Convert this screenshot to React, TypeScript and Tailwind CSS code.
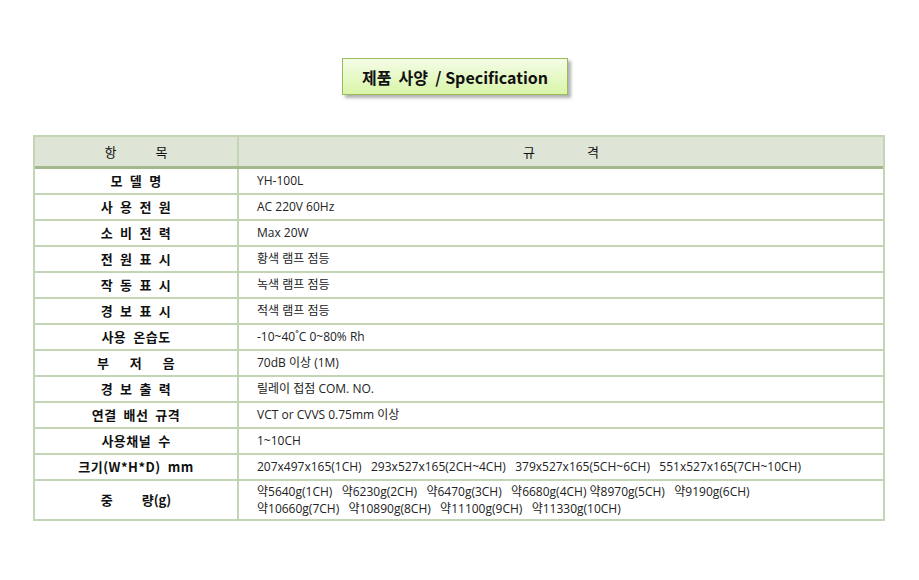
export default function App() {
  const rows: [string, React.ReactNode][] = [
    ["모 델 명", "YH-100L"],
    ["사 용 전 원", "AC 220V 60Hz"],
    ["소 비 전 력", "Max 20W"],
    ["전 원 표 시", "황색 램프 점등"],
    ["작 동 표 시", "녹색 램프 점등"],
    ["경 보 표 시", "적색 램프 점등"],
    ["사용 온습도", "-10~40˚C 0~80% Rh"],
    ["부　 저　 음", "70dB 이상 (1M)"],
    ["경 보 출 력", "릴레이 접점 COM. NO."],
    ["연결 배선 규격", "VCT or CVVS 0.75mm 이상"],
    ["사용채널 수", "1~10CH"],
    ["크기(W*H*D) mm", "207x497x165(1CH)\u00a0\u00a0 293x527x165(2CH~4CH)\u00a0\u00a0 379x527x165(5CH~6CH)\u00a0\u00a0 551x527x165(7CH~10CH)"],
  ];
  const font = { fontFamily: '"Noto Sans CJK KR", "Noto Sans", sans-serif' };
  const vfont = { fontFamily: '"Open Sans", "Noto Sans CJK KR", sans-serif' };
  return (
    <div className="w-[919px] h-[580px] bg-white relative text-[#111]" style={font}>
      <div className="flex pt-[58px] pl-[342px]">
        <div className="w-[226px] h-[37px] border border-[#9bbb59] bg-gradient-to-b from-[#f4fce6] to-[#d9f5a8] shadow-[3px_3px_3px_rgba(0,0,0,0.3)] flex items-center justify-center text-[16px] font-bold">
          제품&nbsp; 사양&nbsp; / Specification
        </div>
      </div>
      <div className="mx-[33px] mt-[40px] w-[852px] border-2 border-[#c3d5b4]">
        <div className="flex h-[32px] bg-[#dfe5d6] border-b-[3px] border-[#a3b88d] text-[13px] items-center">
          <div className="w-[204px] text-center border-r-2 border-[#c3d5b4] h-full flex items-center justify-center">항　　　목</div>
          <div className="flex-1 text-center">규　　　　격</div>
        </div>
        {rows.map(([k, v], i) => (
          <div key={i} className="flex h-[26px] border-b-2 border-[#c3d5b4] items-center">
            <div className="w-[204px] h-full border-r-2 border-[#c3d5b4] flex items-center justify-center text-[13px] font-bold whitespace-pre tracking-[0.5px]">{k.replace(/ /g, "  ")}</div>
            <div className="flex-1 pl-[18px] text-[12px] text-[#222] whitespace-nowrap" style={vfont}>{v}</div>
          </div>
        ))}
        <div className="flex h-[38px] items-center">
          <div className="w-[204px] h-full border-r-2 border-[#c3d5b4] flex items-center justify-center text-[13px] font-bold">중　　 량(g)</div>
          <div className="flex-1 pl-[18px] text-[12px] leading-[17px] text-[#222] whitespace-nowrap" style={vfont}>
            <div>약5640g(1CH)&nbsp;&nbsp; 약6230g(2CH)&nbsp;&nbsp; 약6470g(3CH)&nbsp;&nbsp; 약6680g(4CH) 약8970g(5CH)&nbsp;&nbsp; 약9190g(6CH)</div>
            <div>약10660g(7CH)&nbsp;&nbsp; 약10890g(8CH)&nbsp;&nbsp; 약11100g(9CH)&nbsp;&nbsp; 약11330g(10CH)</div>
          </div>
        </div>
      </div>
    </div>
  );
}
